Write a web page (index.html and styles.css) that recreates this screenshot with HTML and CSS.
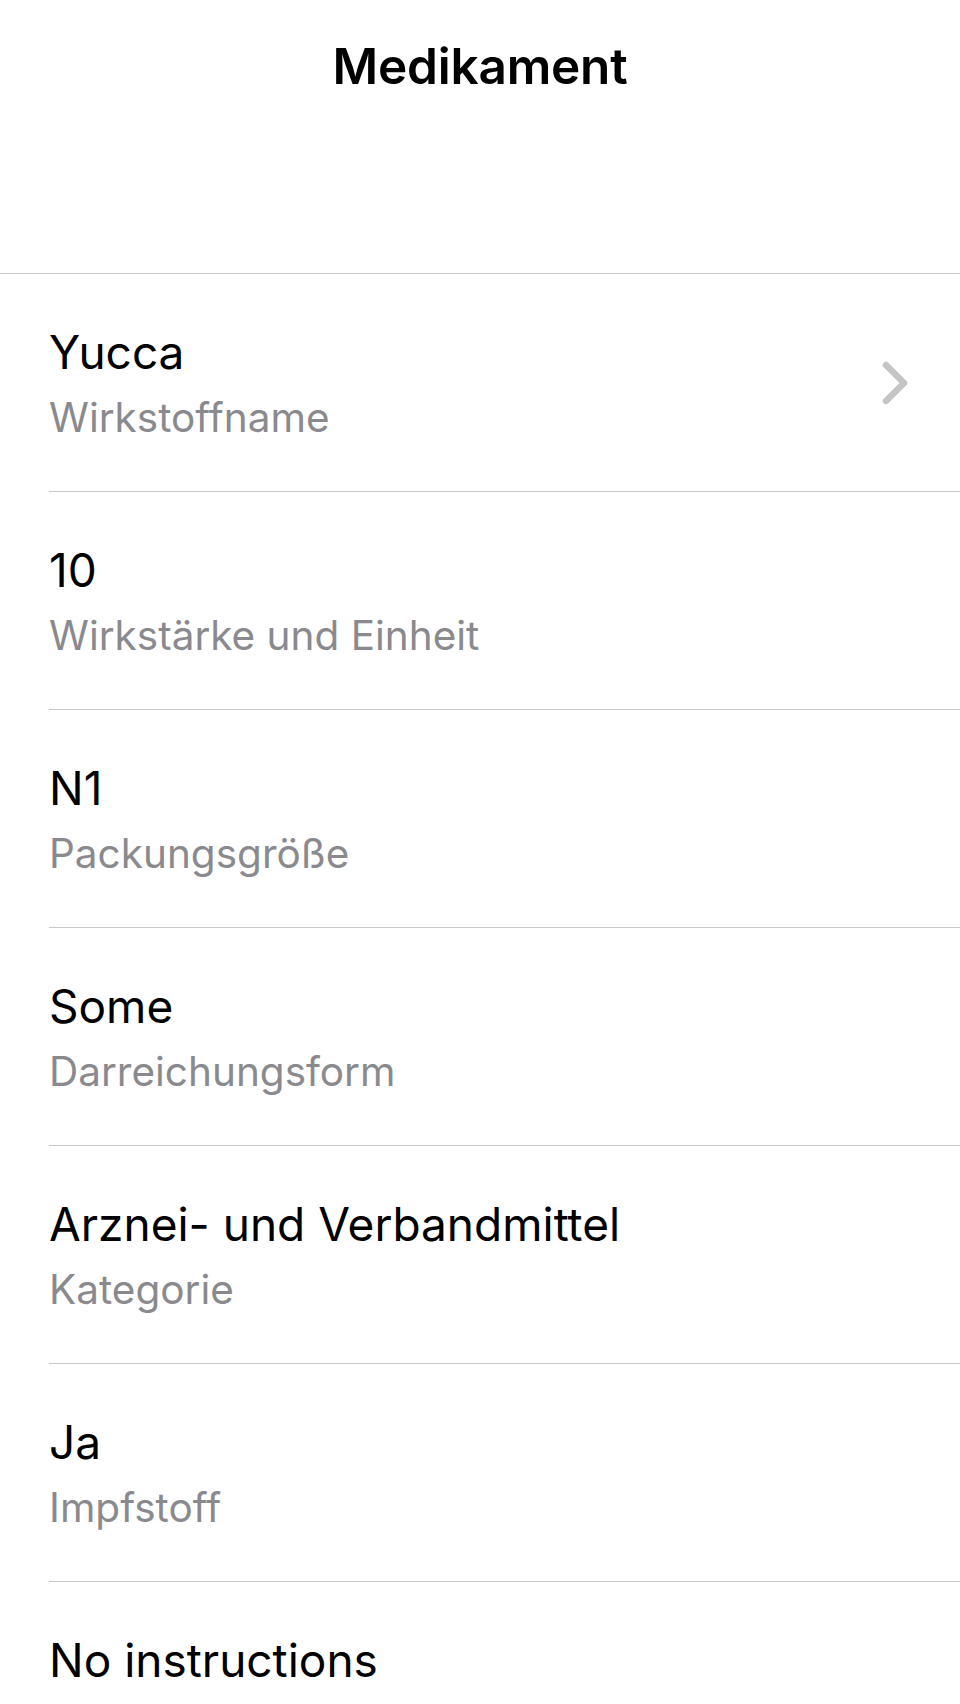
FILE: index.html
```html
<!DOCTYPE html>
<html lang="de">
<head>
<meta charset="utf-8">
<title>Medikament</title>
<link rel="stylesheet" href="styles.css">
</head>
<body>
<div class="screen">
  <header class="nav">
    <h1 class="nav-title">Medikament</h1>
  </header>
  <ul class="list">
    <li class="row">
      <div class="cell">
        <div class="value">Yucca</div>
        <div class="label">Wirkstoffname</div>
      </div>
      <svg class="chevron" width="26" height="44" viewBox="0 0 26 44" aria-hidden="true">
        <polyline points="4,4 22,22 4,40" fill="none" stroke="#c4c4c7" stroke-width="6.5" stroke-linecap="round" stroke-linejoin="round"/>
      </svg>
    </li>
    <li class="row">
      <div class="cell">
        <div class="value">10</div>
        <div class="label">Wirkstärke und Einheit</div>
      </div>
    </li>
    <li class="row">
      <div class="cell">
        <div class="value">N1</div>
        <div class="label">Packungsgröße</div>
      </div>
    </li>
    <li class="row">
      <div class="cell">
        <div class="value">Some</div>
        <div class="label">Darreichungsform</div>
      </div>
    </li>
    <li class="row">
      <div class="cell">
        <div class="value">Arznei- und Verbandmittel</div>
        <div class="label">Kategorie</div>
      </div>
    </li>
    <li class="row">
      <div class="cell">
        <div class="value">Ja</div>
        <div class="label">Impfstoff</div>
      </div>
    </li>
    <li class="row">
      <div class="cell">
        <div class="value">No instructions</div>
      </div>
    </li>
  </ul>
</div>
</body>
</html>
```

FILE: styles.css
```css
html, body {
  margin: 0;
  padding: 0;
  background: #ffffff;
}
body {
  font-family: Inter, "Noto Sans", "Liberation Sans", sans-serif;
  color: #000000;
}
.screen {
  width: 960px;
  height: 1704px;
  overflow: hidden;
  display: flex;
  flex-direction: column;
}
.nav {
  box-sizing: border-box;
  flex: none;
  height: 274px;
  padding-top: 36px;
  border-bottom: 1px solid #c8c8ca;
}
.nav-title {
  margin: 0;
  text-align: center;
  font-size: 49.5px;
  line-height: 60px;
  font-weight: 600;
  letter-spacing: -0.2px;
}
.list {
  flex: 1;
  min-height: 0;
  overflow: hidden;
  list-style: none;
  margin: 0;
  padding: 0 0 0 49px;
}
.row {
  box-sizing: border-box;
  height: 218px;
  display: flex;
  align-items: center;
  border-bottom: 1px solid #c8c8ca;
  padding-right: 52px;
}
.cell {
  flex: 1;
  display: flex;
  flex-direction: column;
  gap: 6px;
  align-self: flex-start;
  padding-top: 48px;
}
.value {
  font-size: 46px;
  line-height: 60px;
}
.label {
  font-size: 40.5px;
  line-height: 60px;
  color: #8a8a8e;
}
.chevron {
  flex: none;
}
```
